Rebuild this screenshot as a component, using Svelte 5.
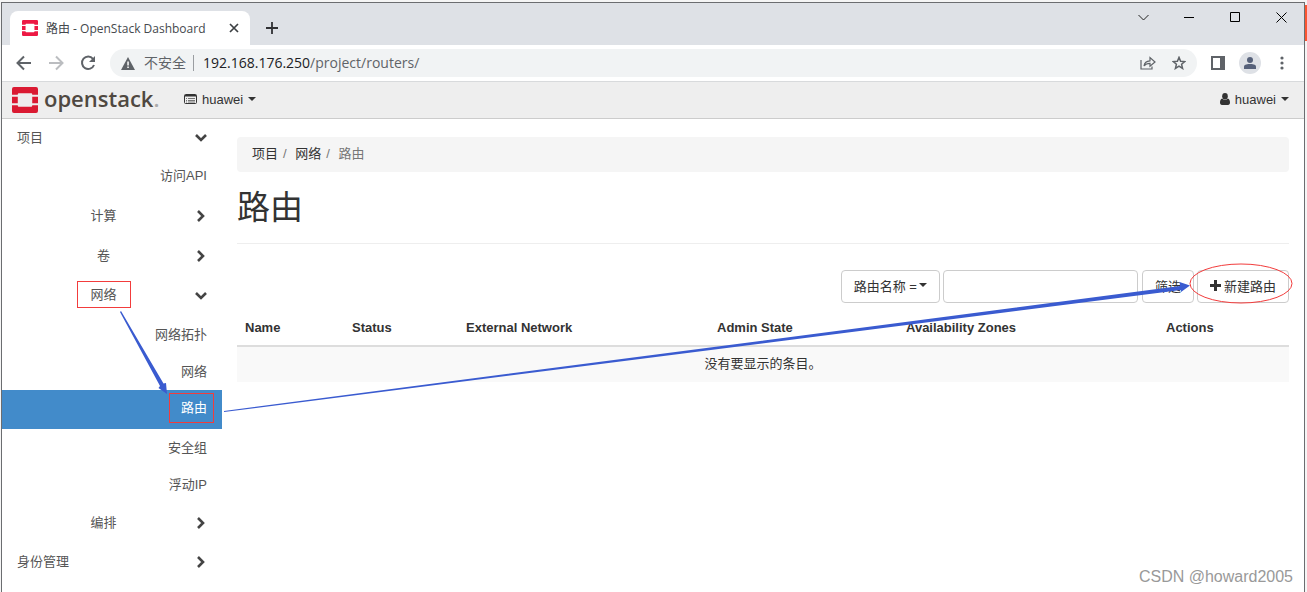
<script>
	const menu = [
		{ label: '项目', kind: 'section', open: true },
		{ label: '访问API', kind: 'panel first' },
		{ label: '计算', kind: 'group', open: false },
		{ label: '卷', kind: 'group', open: false },
		{ label: '网络', kind: 'group', open: true, marked: true },
		{ label: '网络拓扑', kind: 'panel' },
		{ label: '网络', kind: 'panel' },
		{ label: '路由', kind: 'panel active', marked: true },
		{ label: '安全组', kind: 'panel' },
		{ label: '浮动IP', kind: 'panel' },
		{ label: '编排', kind: 'group', open: false },
		{ label: '身份管理', kind: 'section', open: false }
	];

	// column widths are shared out in proportion by the fixed table layout
	const columns = [
		{ title: 'Name', width: 107 },
		{ title: 'Status', width: 114 },
		{ title: 'External Network', width: 251 },
		{ title: 'Admin State', width: 189 },
		{ title: 'Availability Zones', width: 260 },
		{ title: 'Actions', width: 131 }
	];

	let url = { host: '192.168.176.250', path: '/project/routers/' };
	let filter = $state('');
</script>

{#snippet logo(size)}
	<svg class="logo" width={size} height={size} viewBox="0 0 27 27" fill="currentColor" aria-hidden="true">
		<path d="M2 0h23a2 2 0 0 1 2 2v6h-6V7.500a1 1 0 0 0-1-1H7a1 1 0 0 0-1 1V8H0V2a2 2 0 0 1 2-2z" />
		<path d="M0 10h6v7H0zM21 10h6v7h-6z" />
		<path d="M0 19h6v.5a1 1 0 0 0 1 1h13a1 1 0 0 0 1-1V19h6v6a2 2 0 0 1-2 2H2a2 2 0 0 1-2-2z" />
	</svg>
{/snippet}

{#snippet caret()}
	<svg class="caret" width="8" height="4" viewBox="0 0 8 4" aria-hidden="true"><path d="M0 0h8L4 4z" fill="currentColor" /></svg>
{/snippet}

<div class="desktop">
	<div class="window">
		<div class="tabstrip">
			<div class="tab">
				{@render logo(16)}
				<span class="tab-title">路由 - OpenStack Dashboard</span>
				<button class="plain" aria-label="Close tab">
					<svg width="10" height="10" viewBox="0 0 10 10" stroke="#3c4043" stroke-width="1.700"><path d="M1 1l8 8M9 1l-8 8" /></svg>
				</button>
			</div>
			<button class="plain new-tab" aria-label="New tab">
				<svg width="12" height="12" viewBox="0 0 12 12" stroke="#303134" stroke-width="1.800"><path d="M6 0v12M0 6h12" /></svg>
			</button>
			<div class="window-buttons">
				<button class="plain" aria-label="Search tabs">
					<svg width="11" height="11" viewBox="0 0 11 11" fill="none" stroke="#222"><path d="M.5 3l5 5 5-5" /></svg>
				</button>
				<button class="plain" aria-label="Minimize">
					<svg width="11" height="11" viewBox="0 0 11 11" stroke="#000"><path d="M0 5.500h10" /></svg>
				</button>
				<button class="plain" aria-label="Maximize">
					<svg width="11" height="11" viewBox="0 0 11 11" fill="none" stroke="#000"><path d="M.5.5h9v9h-9z" /></svg>
				</button>
				<button class="plain" aria-label="Close">
					<svg width="11" height="11" viewBox="0 0 11 11" stroke="#000"><path d="M.5.5l10 10M10.500.5l-10 10" /></svg>
				</button>
			</div>
		</div>

		<div class="toolbar">
			<button class="plain" aria-label="Back">
				<svg width="16" height="16" viewBox="0 0 16 16" fill="none" stroke="#5f6368" stroke-width="2"><path d="M15 8H2M8 1.500L1.500 8 8 14.500" /></svg>
			</button>
			<button class="plain" aria-label="Forward">
				<svg width="16" height="16" viewBox="0 0 16 16" fill="none" stroke="#bbbdc0" stroke-width="2"><path d="M1 8h13M8 1.500L14.500 8 8 14.500" /></svg>
			</button>
			<button class="plain" aria-label="Reload">
				<svg width="16" height="16" viewBox="0 0 16 16" fill="none" stroke="#5f6368" stroke-width="2"><path d="M13 3.800A6.200 6.200 0 1 0 14 10" /><path d="M15 1v6H9l2.500-2.500L13 3z" fill="#5f6368" stroke="none" /></svg>
			</button>
			<div class="omnibox">
				<svg width="14" height="13" viewBox="0 0 14 13"><path d="M7 0l7 13H0z" fill="#5f6368" /><path d="M6.300 4.500h1.500v4H6.300zM6.300 9.500h1.500V11H6.300z" fill="#fff" /></svg>
				<span class="insecure">不安全</span>
				<span class="url">{url.host}<span>{url.path}</span></span>
				<button class="plain" aria-label="Share">
					<svg width="16" height="14" viewBox="0 0 16 14" fill="none" stroke="#5f6368" stroke-width="1.200"><path d="M1 4v9h11v-2.500" /><path d="M4 10c.5-3.500 2.500-5 6-5.200V1.500L15 6l-5 4.200V7.300C7.500 7.300 5.500 8 4 10z" /></svg>
				</button>
				<button class="plain" aria-label="Bookmark">
					<svg width="14" height="14" viewBox="0 0 14 14" fill="none" stroke="#5f6368" stroke-width="1.500"><path d="M7 1.400l1.600 3.900 4.200.3-3.200 2.700 1 4.200L7 10.200l-3.600 2.300 1-4.200L1.200 5.600l4.200-.3z" /></svg>
				</button>
			</div>
			<button class="plain" aria-label="Side panel">
				<svg width="14" height="14" viewBox="0 0 14 14"><path d="M1 1h12v12H1z" fill="none" stroke="#5f6368" stroke-width="2" /><path d="M9 0h5v14H9z" fill="#5f6368" /></svg>
			</button>
			<button class="plain profile" aria-label="Profile">
				<svg width="12" height="12" viewBox="0 0 12 12" fill="#56617a"><circle cx="6" cy="3" r="3" /><path d="M0 12V9.500C0 7.500 4 7 6 7s6 .5 6 2.500V12z" /></svg>
			</button>
			<button class="plain" aria-label="Menu">
				<svg width="4" height="14" viewBox="0 0 4 14" fill="#5f6368"><circle cx="2" cy="2" r="1.600" /><circle cx="2" cy="7" r="1.600" /><circle cx="2" cy="12" r="1.600" /></svg>
			</button>
		</div>

		<header>
			<a class="brand" href="#home">
				{@render logo(26)}
				<span>openstack<small>.</small></span>
			</a>
			<button class="plain context">
				<svg width="13" height="10" viewBox="0 0 13 10"><rect x=".5" y=".5" width="12" height="9" rx="1" fill="none" stroke="#333" /><path d="M1 1h11v1.500H1z" fill="#333" /><path d="M2 4.500h1M4 4.500h7M2 6.500h1M4 6.500h7M2 8h1M4 8h7" stroke="#555" stroke-width=".8" /></svg>
				huawei
				{@render caret()}
			</button>
			<button class="plain user">
				<svg width="10" height="12" viewBox="0 0 10 12" fill="#333"><ellipse cx="5" cy="3.200" rx="2.800" ry="3.200" /><path d="M2.200 5.500C.7 6 0 7.500 0 9.500 0 11 .7 12 2 12h6c1.300 0 2-1 2-2.500 0-2-.7-3.500-2.200-4C6.500 7.200 3.500 7.200 2.200 5.500z" /></svg>
				huawei
				{@render caret()}
			</button>
		</header>

		<div class="body">
			<nav>
				{#each menu as item}
					<a href="#menu" class={item.kind}>
						<span class:marked={item.marked}>{item.label}</span>
						{#if item.open !== undefined}
							<svg class="chevron" class:open={item.open} width="12" height="12" viewBox="0 0 12 12" fill="none" stroke="#444" stroke-width="2.600"><path d="M3 1l5 5-5 5" /></svg>
						{/if}
					</a>
				{/each}
			</nav>

			<main>
				<ol class="breadcrumb">
					<li><a href="#project">项目</a></li>
					<li><a href="#network">网络</a></li>
					<li class="current">路由</li>
				</ol>
				<h1>路由</h1>

				<div class="actions">
					<button class="btn dropdown">路由名称 = {@render caret()}</button>
					<input type="text" aria-label="路由名称" bind:value={filter} />
					<button class="btn">筛选</button>
					<button class="btn">
						<svg width="11" height="11" viewBox="0 0 11 11" stroke="#333" stroke-width="3"><path d="M5.500 0v11M0 5.500h11" /></svg>
						新建路由
					</button>
				</div>

				<table>
					<colgroup>
						{#each columns as column}
							<col style="width: {column.width}px" />
						{/each}
					</colgroup>
					<thead>
						<tr>
							{#each columns as column}
								<th>{column.title}</th>
							{/each}
						</tr>
					</thead>
					<tbody>
						<tr>
							<td colspan={columns.length}>没有要显示的条目。</td>
						</tr>
					</tbody>
				</table>
			</main>
		</div>
	</div>

	<!-- hand-drawn pointers: menu group, menu entry, create button -->
	<svg class="pointers" width="1307" height="592" viewBox="0 0 1307 592" aria-hidden="true">
		<path d="M120 312L121 311L163.500 383.500L166 383L167 394L158.500 388L160 386z" fill="#3a5bd0" />
		<path d="M224 411L1180 286L1179.500 282L1190 285.500L1181 292L1181 290L224 412z" fill="#3a5bd0" />
		<ellipse cx="1241" cy="283.500" rx="51" ry="19.500" fill="none" stroke="#f23c3c" />
	</svg>
	<div class="watermark">CSDN @howard2005</div>
</div>

<style>
	:global(body) {
		margin: 0;
	}

	.desktop {
		position: relative;
		box-sizing: border-box;
		min-height: 100vh;
		padding: 2px 2px 0 1px;
		display: flex;
		overflow: hidden;
		/* sliver of the page behind, at the right edge */
		background: linear-gradient(#fc5531, #fc5531) right 5px / 2px 36px no-repeat #f5f5f5;
		background-position: right 0 top 5px;
		font-family: 'Liberation Sans', 'Noto Sans CJK SC', sans-serif;
		font-size: 13px;
		color: #333;
	}

	.window {
		flex: 1;
		min-width: 0;
		border: 1px solid #6b6d70;
		border-bottom: 0;
		background: #fff;
	}

	.plain {
		display: flex;
		align-items: center;
		justify-content: center;
		padding: 0;
		border: 0;
		background: none;
		font: inherit;
		color: inherit;
	}

	svg {
		display: block;
		flex-shrink: 0;
	}

	.tabstrip {
		display: flex;
		height: 42px;
		padding-left: 8px;
		background: #dee1e6;
	}

	.tab {
		display: flex;
		align-items: center;
		box-sizing: border-box;
		width: 240px;
		margin-top: 8px;
		padding: 0 11px 0 12px;
		border-radius: 8px 8px 0 0;
		background: #fff;
		font-family: 'Open Sans', 'Noto Sans CJK SC', sans-serif;
		font-size: 12px;
		color: #45494d;
	}

	.tab .logo {
		color: #ed1944;
	}

	.tab-title {
		flex: 1;
		margin-left: 8px;
		white-space: nowrap;
	}

	.new-tab {
		width: 44px;
		padding-top: 8px;
	}

	.window-buttons {
		display: flex;
		height: 28px;
		margin-left: auto;
	}

	.window-buttons button {
		width: 46px;
	}

	.toolbar {
		display: flex;
		align-items: center;
		gap: 16px;
		height: 36px;
		padding: 0 20px 0 14px;
		border-bottom: 1px solid #d8dadc;
	}

	.omnibox {
		flex: 1;
		display: flex;
		align-items: center;
		gap: 16px;
		box-sizing: border-box;
		height: 28px;
		margin: 0 -2px;
		padding: 0 11px;
		border-radius: 14px;
		background: #f1f3f4;
		font-family: 'Open Sans', 'Noto Sans CJK SC', sans-serif;
		font-size: 14px;
		color: #202124;
	}

	.insecure {
		margin-left: -7px;
		padding-right: 7px;
		border-right: 1px solid #9a9da1;
		line-height: 16px;
		color: #5f6368;
	}

	.url {
		flex: 1;
		margin-left: -7px;
		padding-bottom: 2px;
	}

	.url span {
		color: #5f6368;
	}

	.profile {
		width: 22px;
		height: 22px;
		margin: 0 3px 0 -2px;
		border-radius: 50%;
		background: #dee1e6;
	}

	header {
		display: flex;
		align-items: center;
		height: 36px;
		padding: 0 15px 0 10px;
		border-bottom: 1px solid #ccc;
		background: #eee;
	}

	.brand {
		display: flex;
		align-items: center;
		gap: 6px;
		width: 172px;
		text-decoration: none;
		font-family: 'Open Sans', sans-serif;
		font-size: 22px;
		font-weight: 600;
		line-height: 30px;
		color: #4f4841;
	}

	.brand .logo {
		color: #da1a32;
	}

	.brand span {
		padding-bottom: 4px;
	}

	.brand small {
		font-size: 22px;
		color: #aaa;
	}

	.context,
	.user {
		gap: 5px;
		padding-bottom: 2px;
	}

	.user {
		margin-left: auto;
	}

	.body {
		display: flex;
	}

	nav {
		width: 220px;
		flex-shrink: 0;
	}

	nav a {
		display: flex;
		align-items: center;
		box-sizing: border-box;
		height: 37px;
		padding: 0 15px;
		text-decoration: none;
		white-space: nowrap;
		color: #555;
	}

	nav span {
		margin-bottom: 3px;
	}

	nav .section {
		justify-content: space-between;
	}

	nav .group {
		height: 40px;
		display: grid;
		grid-template-columns: 60px 53px 1fr;
		justify-items: center;
	}

	nav .group span {
		grid-column: 2;
	}

	nav .group .chevron {
		justify-self: end;
	}

	nav .group .marked {
		padding: 3px 13px;
		border: 1px solid #f23c3c;
		line-height: 19px;
	}

	nav .panel {
		justify-content: flex-end;
	}

	nav .first {
		height: 40px;
	}

	nav .active {
		height: 39px;
		padding-right: 8px;
		background: #428bca;
		color: #fff;
	}

	nav .active .marked {
		padding: 4px 6px 4px 11px;
		border: 1px solid #f23c3c;
		line-height: 20px;
	}

	.chevron.open {
		transform: rotate(90deg);
	}

	main {
		flex: 1;
		min-width: 0;
		padding: 18px 15px 0;
	}

	.breadcrumb {
		display: flex;
		margin: 0;
		padding: 7px 15px 9px;
		border-radius: 4px;
		background: #f5f5f5;
		list-style: none;
		line-height: 19px;
	}

	.breadcrumb a {
		text-decoration: none;
		color: #333;
	}

	.breadcrumb li + li::before {
		content: '/\00a0';
		padding: 0 5px;
		color: #777;
	}

	.breadcrumb .current {
		color: #777;
	}

	h1 {
		margin: 16px 0 26px;
		padding-bottom: 16px;
		border-bottom: 1px solid #eee;
		font-size: 33px;
		font-weight: 400;
		line-height: 39px;
	}

	.actions {
		display: flex;
		justify-content: flex-end;
		gap: 3px;
	}

	.btn {
		display: flex;
		align-items: center;
		gap: 3px;
		height: 33px;
		padding: 0 12px 3px;
		border: 1px solid #ccc;
		border-radius: 4px;
		background: #fff;
		font: inherit;
		color: #333;
		white-space: nowrap;
	}

	.dropdown {
		gap: 2px;
	}

	.actions input {
		box-sizing: border-box;
		width: 195px;
		height: 33px;
		margin: 0 1px 0 0;
		padding: 6px 12px;
		border: 1px solid #ccc;
		border-radius: 4px;
		font: inherit;
	}

	table {
		width: 100%;
		margin-top: 7px;
		table-layout: fixed;
		border-collapse: collapse;
		line-height: 19px;
	}

	th {
		padding: 8px;
		border-bottom: 2px solid #ddd;
		text-align: left;
		white-space: nowrap;
	}

	td {
		padding: 7px 8px 9px;
		background: #f9f9f9;
		text-align: center;
	}

	.pointers {
		position: absolute;
		top: 0;
		left: 0;
		pointer-events: none;
	}

	.watermark {
		position: absolute;
		right: 14px;
		bottom: 5px;
		font-size: 16px;
		line-height: 20px;
		color: #999;
	}
</style>
